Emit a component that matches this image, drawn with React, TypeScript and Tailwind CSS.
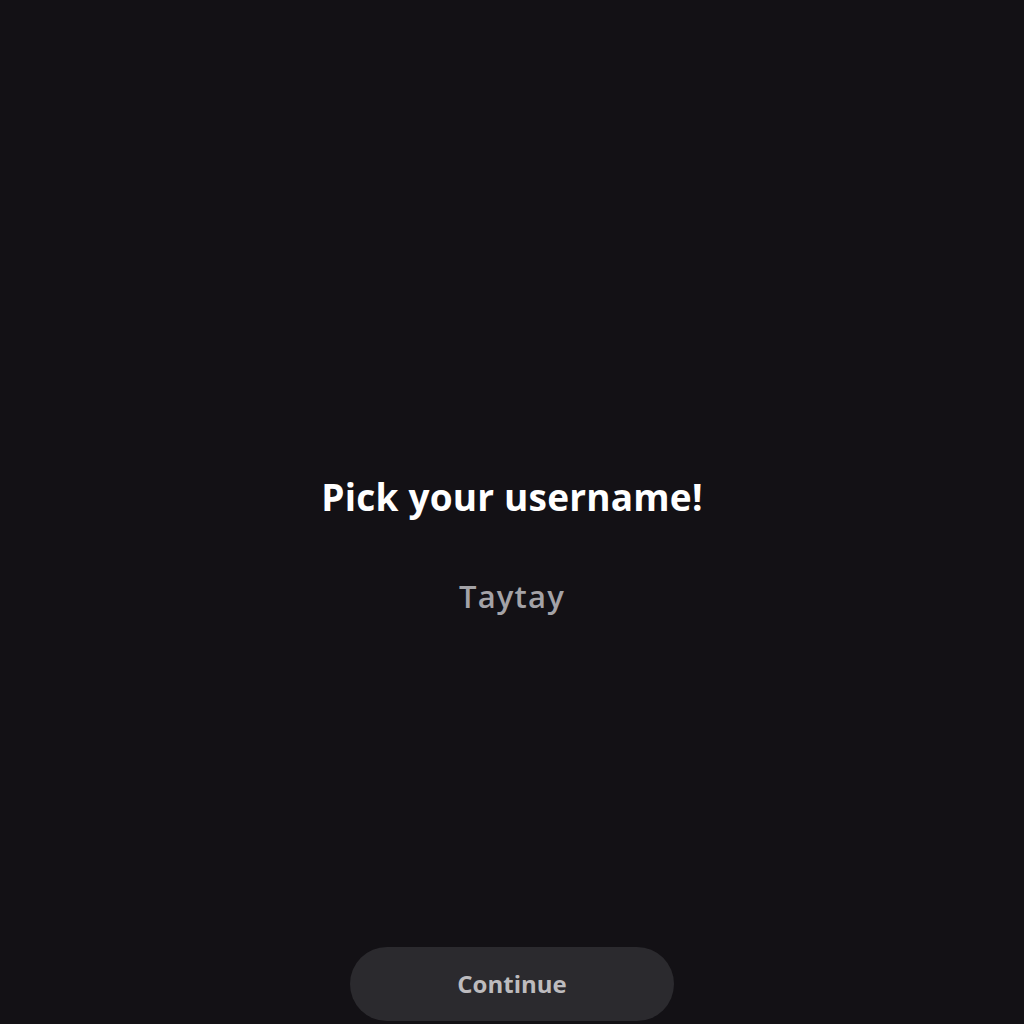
export default function App() {
  return (
    <div
      className="flex h-[1024px] w-full flex-col items-center bg-[#131115]"
      style={{ fontFamily: "'Open Sans', Lato, sans-serif" }}
    >
      <div className="flex flex-1 flex-col items-center pt-[475px]">
        <h1 className="text-[37px] font-bold leading-[44px] tracking-[0.2px] text-white">
          Pick your username!
        </h1>
        <p className="mt-[59px] text-[31px] font-semibold leading-[36px] tracking-[1.2px] text-[#a4a3a7]">
          Taytay
        </p>
      </div>
      <button className="mb-[3px] flex h-[74px] w-[324px] items-center justify-center rounded-full bg-[#2b2a2e] text-[24px] font-bold text-[#bdbbbe]">
        Continue
      </button>
    </div>
  );
}
